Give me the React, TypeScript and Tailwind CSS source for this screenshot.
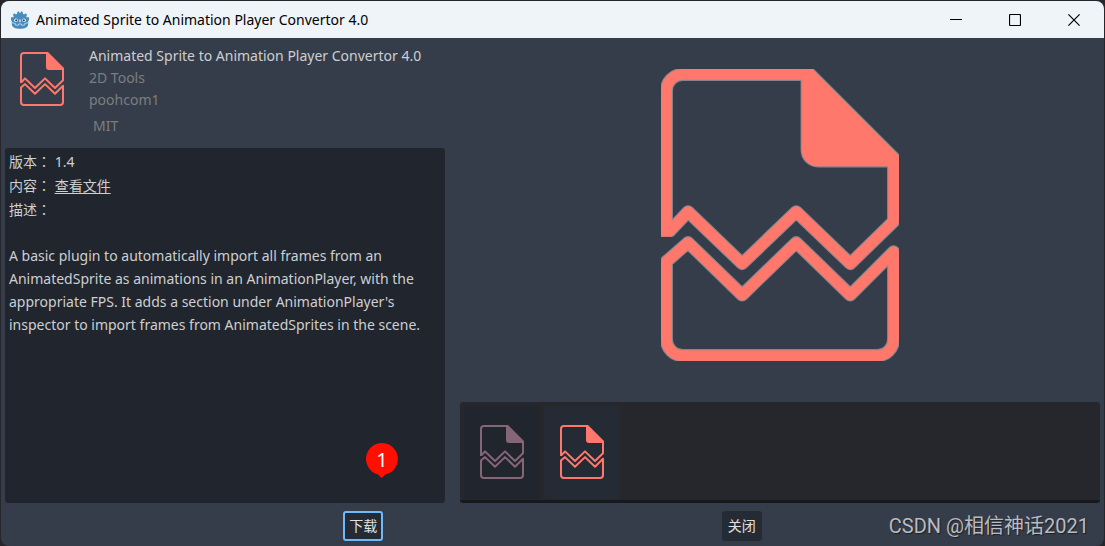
const uiFont = "font-['Noto_Sans','Noto_Sans_CJK_SC',sans-serif]";

const thumbnails = [
	{ label: "Preview 1", active: false },
	{ label: "Preview 2", active: true },
];

const description =
	"A basic plugin to automatically import all frames from an AnimatedSprite as animations in an AnimationPlayer, with the appropriate FPS. It adds a section under AnimationPlayer's inspector to import frames from AnimatedSprites in the scene.";

function TornFileIcon({ className, halo = false }: { className: string; halo?: boolean }) {
	const upper = "M27 1H4A3 3 0 0 0 1 4V31M1.4 30.2L5 26.4L15 36L25 26.4L35 36L43 28.2V17";
	const lower = "M1 35.6L5 32.1L15 41.8L25 32.1L35 41.8L43 33.8V50A3 3 0 0 1 40 53H4A3 3 0 0 1 1 50Z";
	const fold = "M26 0H28L44 16V18H29A3 3 0 0 1 26 15Z";

	return (
		<svg viewBox="0 0 44 54" fill="none" className={className} aria-hidden="true">
			{halo && (
				<g stroke="#89858c" strokeWidth="2.4" strokeLinejoin="round">
					<path d={upper} />
					<path d={lower} />
					<path d={fold} strokeWidth="0.4" />
				</g>
			)}
			<g stroke="currentColor" strokeWidth="2" strokeLinejoin="round">
				<path d={upper} />
				<path d={lower} />
			</g>
			<path d={fold} fill="currentColor" />
		</svg>
	);
}

function GodotLogo() {
	return (
		<svg viewBox="0 0 18 18" className="size-[18px]" aria-hidden="true">
			<path
				d="M6.2.9 8 .3l.5 1.8h1L10 .3l1.8.6.1 1.8 1.2.7 1.5-1.1 1.5 1.5-.9 1.6.5.9H18v3l-.8.6v3.3c0 3-3.7 4.6-8.2 4.6S.8 16.2.8 13.2V9.9L0 9.3v-3h2.3l.5-.9-.9-1.6 1.5-1.5 1.5 1.1 1.2-.7z"
				fill="#478cbf"
			/>
			<path d="M1 11.8l3.2.5.3 1.8 2.7.2.3-1.3h3l.3 1.3 2.7-.2.3-1.8 3.2-.5" fill="none" stroke="#e5eef5" strokeWidth=".7" />
			<circle cx="5" cy="9.3" r="1.8" fill="#fff" />
			<circle cx="13" cy="9.3" r="1.8" fill="#fff" />
			<circle cx="5.2" cy="9.3" r="1.1" fill="#414042" />
			<circle cx="12.8" cy="9.3" r="1.1" fill="#414042" />
			<path d="M9 8.8v2" stroke="#fff" strokeWidth="1.1" strokeLinecap="round" />
		</svg>
	);
}

function TitleBar() {
	const button = "flex h-full w-[59px] items-center justify-center";

	return (
		<header className="flex h-[37px] shrink-0 items-center bg-[#eff4f9] pl-2.5 pr-px text-black">
			<GodotLogo />
			<h1 className="ml-[7px] flex-1 font-['Noto_Sans',sans-serif] text-sm">
				Animated Sprite to Animation Player Convertor 4.0
			</h1>
			<button type="button" aria-label="Minimize" className={button}>
				<svg viewBox="0 0 12 12" className="size-3" stroke="currentColor" fill="none">
					<path d="M0 5.5h12" />
				</svg>
			</button>
			<button type="button" aria-label="Maximize" className={button}>
				<svg viewBox="0 0 12 12" className="size-3" stroke="currentColor" fill="none">
					<rect x=".5" y=".5" width="11" height="11" rx="1" strokeWidth="1.2" />
				</svg>
			</button>
			<button type="button" aria-label="Close window" className={button}>
				<svg viewBox="0 0 12 12" className="size-3" stroke="currentColor" fill="none">
					<path d="M.4.4l11.2 11.2M11.6.4L.4 11.6" strokeWidth="1.2" />
				</svg>
			</button>
		</header>
	);
}

function FieldLabel({ text }: { text: string }) {
	return (
		<>
			{text}
			<span className="font-['Noto_Sans_CJK_TC',sans-serif]">：</span>{" "}
		</>
	);
}

function AssetDetails() {
	return (
		<section className="flex min-w-0 flex-[440] flex-col">
			<div className="flex h-[106px] shrink-0">
				<TornFileIcon className="ml-[15px] mt-2.5 h-[54px] w-11 text-[#ff786b]" />
				<div className="ml-[25px] mt-[3px] leading-[22px] text-[#7c7d7f]">
					<h2 className="text-[#cdcfd2]">Animated Sprite to Animation Player Convertor 4.0</h2>
					<p>2D Tools</p>
					<p>poohcom1</p>
					<p className="ml-1 mt-1">MIT</p>
				</div>
			</div>
			<div className="relative flex-1 rounded-[3px] bg-[#21252d] px-1 pt-px text-[#cdcfd2]">
				<p className="h-6 leading-6">
					<FieldLabel text="版本" />
					1.4
				</p>
				<p className="h-6 leading-6">
					<FieldLabel text="内容" />
					<a href="#files" className="underline underline-offset-2">
						查看文件
					</a>
				</p>
				<p className="h-6 leading-6">
					<FieldLabel text="描述" />
				</p>
				<p className="mt-[23px] leading-[23px]">{description}</p>
				<div className="absolute bottom-[25px] right-[47px] h-[35px] w-8">
					<svg viewBox="0 0 32 35" className="absolute inset-0" aria-hidden="true">
						<path d="M16 0a16 16 0 0 1 3 31.7L15.5 35 12 31.5A16 16 0 0 1 16 0z" fill="#ff0f00" />
					</svg>
					<span className="relative block text-center text-xl leading-[34px] text-white">1</span>
				</div>
			</div>
		</section>
	);
}

function AssetPreview() {
	return (
		<section className="flex min-w-0 flex-[640] flex-col">
			<div className="flex flex-1 items-center justify-center pb-[15px]">
				<TornFileIcon halo className="h-[292px] w-[238px] text-[#ff786b]" />
			</div>
			<div className="flex h-[101px] shrink-0 gap-1 rounded-[3px] border-b-3 border-[#18191d] bg-[#26272c] px-1 pt-1">
				{thumbnails.map((item) => (
					<button
						key={item.label}
						type="button"
						aria-label={item.label}
						aria-pressed={item.active}
						className={
							item.active
								? "flex h-[93px] w-[76px] items-center justify-center rounded-[3px] bg-[#252b34] pb-0.5 text-[#ff786b]"
								: "flex h-[93px] w-[76px] items-center justify-center rounded-[3px] bg-[#21252d] pb-0.5 text-[#856578]"
						}
					>
						<TornFileIcon className="h-[54px] w-11" />
					</button>
				))}
			</div>
		</section>
	);
}

export default function App() {
	return (
		<div className="flex h-screen min-h-[480px] flex-col bg-[#25272d] px-px pt-px">
			<div
				className={`relative flex flex-1 flex-col overflow-hidden rounded-lg bg-[#363d4a] text-sm ${uiFont}`}
			>
				<TitleBar />
				<main className="flex flex-1 flex-col px-1 pb-[5px] pt-1">
					<div className="flex flex-1 gap-[15px]">
						<AssetDetails />
						<AssetPreview />
					</div>
					<footer className="mt-2 flex justify-evenly text-[#e0e0e0]">
						<button
							type="button"
							className="h-[30px] w-10 rounded-[3px] border-2 border-[#70bafa] bg-[#252b34]"
						>
							下载
						</button>
						<button type="button" className="h-[30px] w-10 rounded-[3px] bg-[#252b34]">
							关闭
						</button>
					</footer>
				</main>
				<p className="absolute bottom-1.5 right-[15px] font-[Roboto,'Noto_Sans_CJK_SC',sans-serif] text-xl leading-7 text-[#b9bcc1] [text-shadow:1px_1px_1px_#1b1e24]">
					CSDN @相信神话2021
				</p>
			</div>
		</div>
	);
}
